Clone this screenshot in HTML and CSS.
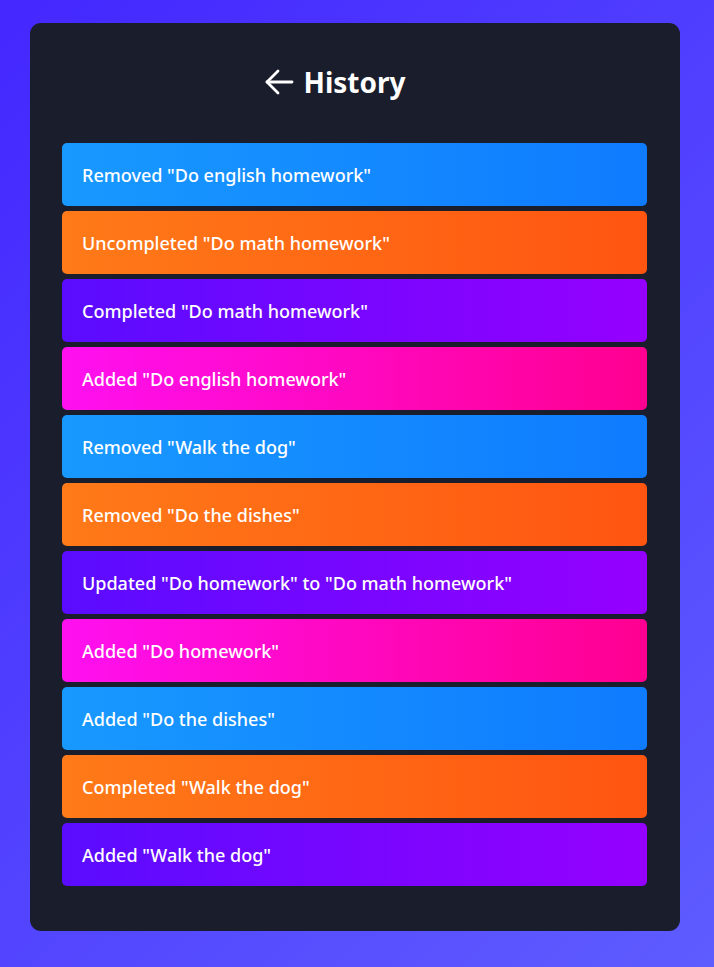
FILE: index.html
```html
<!DOCTYPE html>
<html lang="en">
<head>
<meta charset="utf-8">
<title>History</title>
<link rel="stylesheet" href="styles.css">
</head>
<body>
<main class="card">
  <header class="title">
    <span class="back" aria-label="Back">
      <svg width="30" height="26" viewBox="0 0 30 26" fill="none" stroke="#ffffff" stroke-width="2.8" stroke-linecap="round" stroke-linejoin="round"><path d="M28 13H3"/><path d="M14 2L3 13l11 11"/></svg>
    </span>
    <h1>History</h1>
  </header>
  <ul class="list">
    <li class="item blue">Removed "Do english homework"</li>
    <li class="item orange">Uncompleted "Do math homework"</li>
    <li class="item purple">Completed "Do math homework"</li>
    <li class="item pink">Added "Do english homework"</li>
    <li class="item blue">Removed "Walk the dog"</li>
    <li class="item orange">Removed "Do the dishes"</li>
    <li class="item purple">Updated "Do homework" to "Do math homework"</li>
    <li class="item pink">Added "Do homework"</li>
    <li class="item blue">Added "Do the dishes"</li>
    <li class="item orange">Completed "Walk the dog"</li>
    <li class="item purple">Added "Walk the dog"</li>
  </ul>
</main>
</body>
</html>
```

FILE: styles.css
```css
* { box-sizing: border-box; }
html, body { margin: 0; padding: 0; }
body {
  min-height: 967px;
  background: linear-gradient(135deg, #4427ff 0%, #5e5cff 100%);
  font-family: "Noto Sans", "DejaVu Sans", sans-serif;
  padding: 23px 34px 36px 30px;
}
.card {
  width: 650px;
  background: #1a1d2b;
  border-radius: 11px;
  padding: 37px 33px 45px 32px;
}
.title {
  position: relative;
  display: flex;
  justify-content: center;
  align-items: center;
  height: 44px;
  margin-bottom: 39px;
}
.title h1 {
  margin: 0;
  color: #ffffff;
  font-size: 28px;
  font-weight: 700;
  line-height: 44px;
}
.back {
  position: absolute;
  left: 202px;
  top: 9px;
  display: flex;
}
.list {
  list-style: none;
  margin: 0;
  padding: 0;
  display: flex;
  flex-direction: column;
  gap: 5px;
}
.item {
  height: 63px;
  display: flex;
  align-items: center;
  padding: 0 20px;
  border-radius: 5px;
  color: #ffffff;
  font-size: 18px;
  font-weight: 500;
}
.blue { background: linear-gradient(90deg, #1899ff, #0f7bff); }
.orange { background: linear-gradient(90deg, #ff7a18, #ff5511); }
.purple { background: linear-gradient(90deg, #5a0cff, #9500ff); }
.pink { background: linear-gradient(90deg, #ff10f0, #ff0090); }
```
